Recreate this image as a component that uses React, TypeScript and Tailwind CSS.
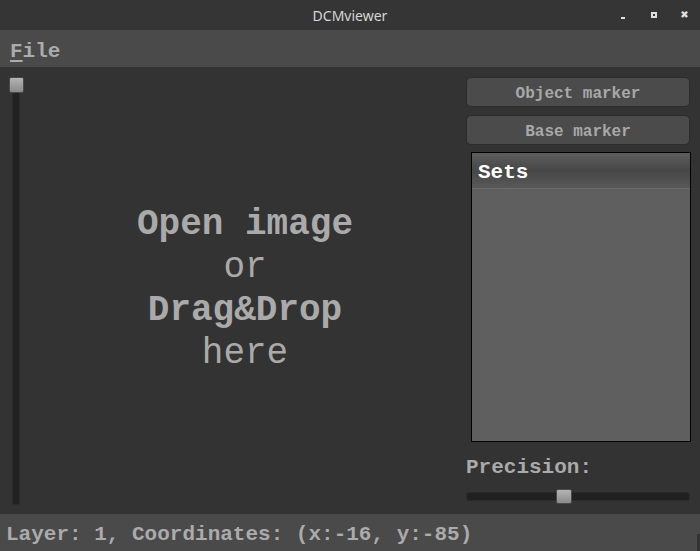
import React from "react"

const mono = "font-['Liberation_Mono',monospace]"

function VSlider() {
  return (
    <div className="w-[32px] flex pl-[12px] pt-[10px] pb-[9px]">
      <div className="relative w-[8px] h-full rounded-[2px] bg-[#222222] border border-[#2b2b2b]">
        <div className="absolute -left-[4px] -top-[1px] w-[15px] h-[16px] rounded-[2px] border border-[#4a4a4a] bg-gradient-to-b from-[#b4b4b4] to-[#8a8a8a]" />
      </div>
    </div>
  )
}

function HSlider() {
  return (
    <div className="relative h-[9px] w-[224px] rounded-[3px] bg-[#212121] border border-[#2a2a2a]">
      <div className="absolute left-[89px] -top-[4px] w-[16px] h-[15px] rounded-[2px] border border-[#4a4a4a] bg-gradient-to-b from-[#b4b4b4] to-[#8a8a8a]" />
    </div>
  )
}

function PanelButton({ label }: { label: string }) {
  return (
    <button className="h-[30px] w-[224px] pt-[3px] rounded-[5px] bg-[#4b4b4b] border border-[#2c2c2c] text-[16px] font-bold text-[#a8a8a8] leading-none">
      {label}
    </button>
  )
}

export default function App() {
  return (
    <div className={`w-[700px] h-[551px] flex flex-col bg-[#333333] ${mono}`}>
      <div className="relative h-[30px] bg-[#353535] flex items-center justify-center">
        <span className="font-['Noto_Sans',sans-serif] text-[14px] text-[#d6d6d6]">DCMviewer</span>
        <div className="absolute right-0 top-0 h-[30px] flex items-center">
          <div className="w-[30px] flex justify-center pt-[6px]">
            <div className="w-[4px] h-[2px] bg-[#e0e0e0]" />
          </div>
          <div className="w-[31px] flex justify-center">
            <div className="w-[6px] h-[6px] border-2 border-[#e0e0e0]" />
          </div>
          <div className="w-[31px] flex justify-center">
            <span className="text-[10px] font-bold text-[#e0e0e0] leading-none font-['DejaVu_Sans',sans-serif]">✖</span>
          </div>
        </div>
      </div>

      <div className="h-[37px] bg-[#4a4a4a] flex items-center px-[10px] pt-[5px]">
        <span className="text-[21px] font-bold text-[#ababab] leading-none">
          <span className="underline underline-offset-[3px] decoration-[2px]">F</span>ile
        </span>
      </div>

      <div className="flex-1 flex">
        <VSlider />
        <div className="flex-1 flex flex-col items-center justify-center text-[36px] leading-[43px] text-[#aaaaaa] pb-[4px] pr-[8px]">
          <span className="font-bold">Open image</span>
          <span>or</span>
          <span className="font-bold">Drag&amp;Drop</span>
          <span>here</span>
        </div>
        <div className="w-[234px] flex flex-col pt-[10px]">
          <div className="flex flex-col gap-[8px]">
            <PanelButton label="Object marker" />
            <PanelButton label="Base marker" />
          </div>
          <div className="mt-[7px] ml-[5px] w-[220px] h-[290px] border border-black bg-[#5f5f5f] flex flex-col">
            <div className="h-[36px] flex items-center px-[6px] pt-[3px] border-b border-[#6a6a6a] bg-gradient-to-b from-[#5e5e5e] via-[#474747] to-[#585858]">
              <span className="text-[21px] font-bold text-white leading-none">Sets</span>
            </div>
          </div>
          <div className="mt-[15px] text-[21px] font-bold text-[#aaaaaa] leading-none">Precision:</div>
          <div className="mt-[14px]">
            <HSlider />
          </div>
        </div>
      </div>

      <div className="relative h-[37px] bg-[#4a4a4a] flex items-center px-[6px] pt-[3px]">
        <span className="text-[21px] font-bold text-[#ababab] leading-none whitespace-pre">
          Layer: 1, Coordinates: (x:-16, y:-85)
        </span>
        <div className="absolute right-0 bottom-0 w-[3px] h-[17px] bg-[#333333]" />
      </div>
    </div>
  )
}
